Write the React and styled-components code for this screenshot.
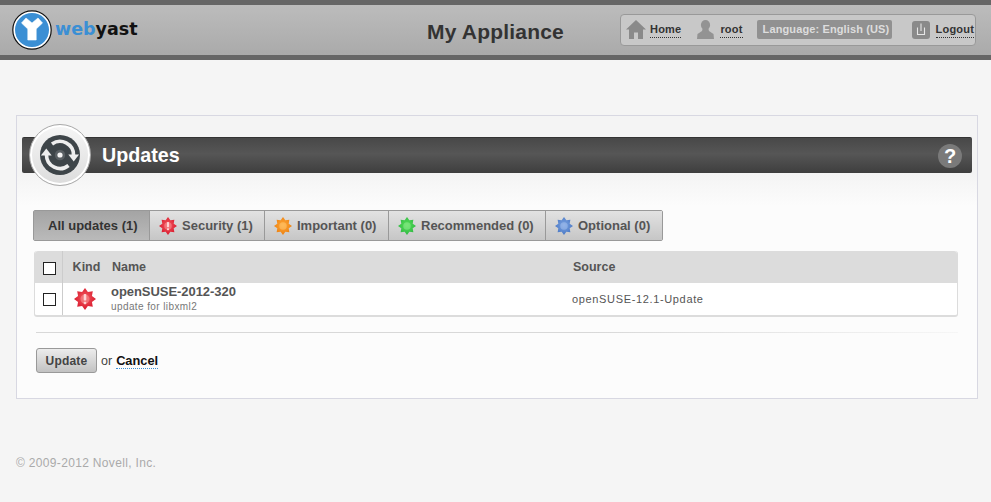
import React from "react";
import styled, { createGlobalStyle } from "styled-components";

const GlobalStyle = createGlobalStyle`
  html, body {
    margin: 0;
    padding: 0;
    background: #f5f5f5;
    font-family: "Liberation Sans", Arial, sans-serif;
  }
`;

const KIND_COLORS = {
  security: ["#f45a60", "#d8182c", "#fba8a8"],
  important: ["#ffa838", "#ec8010", "#ffd080"],
  recommended: ["#58e058", "#30b844", "#a0f0a0"],
  optional: ["#7ca4e2", "#4a78c4", "#b0c8f0"],
};

const starPoints = (cx, cy, outer, inner, count) => {
  const pts = [];
  for (let i = 0; i < count * 2; i++) {
    const r = i % 2 === 0 ? outer : inner;
    const a = (Math.PI * i) / count - Math.PI / 2;
    pts.push(`${(cx + r * Math.cos(a)).toFixed(2)},${(cy + r * Math.sin(a)).toFixed(2)}`);
  }
  return pts.join(" ");
};

const KindIcon = ({ kind, size = 18 }) => {
  const [light, dark, glow] = KIND_COLORS[kind];
  const id = `star-${kind}-${size}`;
  return (
    <svg width={size} height={size} viewBox="0 0 24 24" style={{ flex: "none" }}>
      <defs>
        <radialGradient id={id} cx="50%" cy="45%" r="55%">
          <stop offset="0%" stopColor={light} />
          <stop offset="100%" stopColor={dark} />
        </radialGradient>
      </defs>
      <polygon points={starPoints(12, 12, 12, 8.2, 8)} fill={`url(#${id})`} />
      <circle cx="12" cy="12" r="5" fill={glow} opacity="0.45" />
      {kind === "security" && (
        <g fill="#ffe4e4">
          <rect x="10.6" y="6.6" width="2.8" height="7" rx="0.8" opacity="0.85" />
          <rect x="10.6" y="15" width="2.8" height="2.6" rx="0.8" opacity="0.85" />
        </g>
      )}
    </svg>
  );
};

const Logo = () => (
  <svg width="40" height="40" viewBox="0 0 40 40">
    <circle cx="20" cy="20" r="19.2" fill="#fff" stroke="#111" strokeWidth="1.2" />
    <circle cx="20" cy="20" r="17" fill="#3b8fd4" />
    <path
      d="M9.5 13 L14 8 L20 13 L26 8 L30.5 13 L24.2 19 L24.2 30 L15.8 30 L15.8 19 Z"
      fill="#fff"
      stroke="#fff"
      strokeWidth="0.6"
      strokeLinejoin="round"
    />
  </svg>
);

const HomeIcon = () => (
  <svg width="20" height="19" viewBox="0 0 20 19">
    <path d="M10 0 L20 9.5 L17 9.5 L17 19 L12 19 L12 12.5 L8 12.5 L8 19 L3 19 L3 9.5 L0 9.5 Z" fill="#8a8a8a" />
  </svg>
);

const UserIcon = () => (
  <svg width="17" height="19" viewBox="0 0 17 19">
    <ellipse cx="8.5" cy="5" rx="4.6" ry="5" fill="#939393" />
    <path d="M5.5 9 L11.5 9 L12 11 L16.5 14 L17 19 L0 19 L0.5 14 L5 11 Z" fill="#939393" />
  </svg>
);

const LogoutIcon = () => (
  <svg width="18" height="18" viewBox="0 0 18 18">
    <rect width="18" height="18" rx="3" fill="#8a8a8a" />
    <path d="M5.5 6.5 V13.5 H12.5 V6.5 M9 2.5 V10" fill="none" stroke="#e6e6e6" strokeWidth="1.1" />
  </svg>
);

const UpdatesIcon = () => (
  <svg width="40" height="40" viewBox="0 0 40 40">
    <circle cx="20" cy="20" r="20" fill="#3e4549" />
    <g fill="none" stroke="#eee" strokeWidth="3.6">
      <path d="M6.5 20 A13.5 13.5 0 0 0 28.5 30.5" />
      <path d="M12 9 A13.5 13.5 0 0 1 33.5 20" />
    </g>
    <path d="M6.3 13.5 L0.9 20.5 L11.7 20.5 Z" fill="#eee" />
    <path d="M33.7 26.5 L28.3 19.5 L39.1 19.5 Z" fill="#eee" />
    <circle cx="20" cy="20" r="5.2" fill="#5a6064" />
    <circle cx="20" cy="20" r="2.6" fill="#f4f4f4" />
  </svg>
);

const TABS = [
  { label: "All updates (1)", width: 116, active: true },
  { label: "Security (1)", kind: "security", width: 115 },
  { label: "Important (0)", kind: "important", width: 124 },
  { label: "Recommended (0)", kind: "recommended", width: 157 },
  { label: "Optional (0)", kind: "optional", width: 116 },
];

const App = () => (
  <>
    <GlobalStyle />
    <TopBar>
      <Brand>
        <Logo />
        <BrandName>
          <span>web</span>yast
        </BrandName>
      </Brand>
      <ApplianceName>My Appliance</ApplianceName>
      <UserBox>
        <NavItem $gap={4}>
          <HomeIcon />
          <NavLink>Home</NavLink>
        </NavItem>
        <NavItem $left={16}>
          <UserIcon />
          <NavLink>root</NavLink>
        </NavItem>
        <LanguageBadge>Language: English (US)</LanguageBadge>
        <NavItem $left={20}>
          <LogoutIcon />
          <NavLink>Logout</NavLink>
        </NavItem>
      </UserBox>
    </TopBar>

    <Panel>
      <TitleBar>
        <TitleBadge>
          <UpdatesIcon />
        </TitleBadge>
        <Title>Updates</Title>
        <HelpButton>?</HelpButton>
      </TitleBar>

      <Tabs>
        {TABS.map((tab) => (
          <Tab key={tab.label} $active={tab.active} $width={tab.width}>
            {tab.kind && <KindIcon kind={tab.kind} />}
            {tab.label}
          </Tab>
        ))}
      </Tabs>

      <Table>
        <HeadRow>
          <CheckCell>
            <CheckBox $top={3} />
          </CheckCell>
          <KindCell>Kind</KindCell>
          <NameHead>Name</NameHead>
          <SourceHead>Source</SourceHead>
        </HeadRow>
        <BodyRow>
          <CheckCell>
            <CheckBox />
          </CheckCell>
          <KindCell $shift={5}>
            <KindIcon kind="security" size={22} />
          </KindCell>
          <NameCell>
            <PatchName>openSUSE-2012-320</PatchName>
            <PatchSummary>update for libxml2</PatchSummary>
          </NameCell>
          <SourceCell>openSUSE-12.1-Update</SourceCell>
        </BodyRow>
      </Table>

      <Divider />

      <Actions>
        <UpdateButton>Update</UpdateButton>
        <OrText>or</OrText>
        <CancelLink>Cancel</CancelLink>
      </Actions>
    </Panel>

    <Footer>© 2009-2012 Novell, Inc.</Footer>
  </>
);

const TopBar = styled.header`
  box-sizing: border-box;
  height: 60px;
  border-top: 5px solid #666;
  border-bottom: 5px solid #666;
  background: linear-gradient(#bcbcbc, #aaa);
  display: flex;
  align-items: center;
  padding: 0 15px 0 12px;
`;

const Brand = styled.div`
  display: flex;
  align-items: center;
  width: 415px;
  gap: 3px;
`;

const BrandName = styled.div`
  font-family: "DejaVu Sans", sans-serif;
  font-weight: 700;
  font-size: 17.5px;
  color: #111;
  margin-top: -3px;

  span {
    color: #3b8fd4;
  }
`;

const ApplianceName = styled.div`
  font-size: 21px;
  font-weight: 700;
  color: #333;
  letter-spacing: 0.2px;
  width: 193px;
  margin-top: 4px;
`;

const UserBox = styled.div`
  box-sizing: border-box;
  width: 356px;
  height: 32px;
  margin-left: auto;
  margin-top: -1px;
  border: 1px solid #999;
  border-radius: 4px;
  background: #c8c8c8;
  display: flex;
  align-items: center;
  padding: 0 0 0 5px;
`;

const NavItem = styled.div`
  display: flex;
  align-items: center;
  gap: ${(p) => p.$gap || 6}px;
  margin-left: ${(p) => p.$left || 0}px;
`;

const NavLink = styled.a`
  margin-top: 2px;
  font-size: 11px;
  font-weight: 700;
  color: #333;
  letter-spacing: 0.2px;
  line-height: 13px;
  border-bottom: 1px dotted #333;
  padding-bottom: 1px;
`;

const LanguageBadge = styled.div`
  box-sizing: border-box;
  height: 19px;
  line-height: 19px;
  margin-left: 14px;
  padding: 0 3px 0 6px;
  width: 135px;
  border-radius: 2px;
  background: #919191;
  color: #ddd;
  font-size: 11px;
  font-weight: 700;
  letter-spacing: 0.12px;
  white-space: nowrap;
`;

const Panel = styled.main`
  box-sizing: border-box;
  width: 962px;
  height: 284px;
  margin: 55px 0 0 16px;
  padding: 21px 5px 0;
  border: 1px solid #d8d8e2;
  background: linear-gradient(#f4f4f4 58px, #fcfcfc 90px);
`;

const TitleBar = styled.div`
  position: relative;
  box-sizing: border-box;
  height: 36px;
  border-radius: 2px;
  border-top: 1px solid #333;
  background: linear-gradient(#484848, #565656 45%, #3e3e3e);
  display: flex;
  align-items: center;
  padding: 0 10px 0 80px;
`;

const TitleBadge = styled.div`
  position: absolute;
  left: 7px;
  top: -14px;
  box-sizing: border-box;
  width: 62px;
  height: 62px;
  border-radius: 50%;
  border: 1px solid #aaa;
  background: linear-gradient(#f6f6f6, #dcdcdc);
  box-shadow: inset 0 0 0 2px #fff;
  display: flex;
  align-items: center;
  justify-content: center;
`;

const Title = styled.h1`
  margin: 0;
  font-size: 19.7px;
  font-weight: 700;
  color: #fff;
`;

const HelpButton = styled.div`
  margin-left: auto;
  width: 24px;
  height: 24px;
  border-radius: 50%;
  background: #7a7a7a;
  color: #fff;
  font-size: 20px;
  font-weight: 700;
  line-height: 24px;
  text-align: center;
`;

const Tabs = styled.div`
  box-sizing: border-box;
  display: flex;
  width: 630px;
  height: 31px;
  margin: 37px 0 0 11px;
  border: 1px solid #999;
  border-radius: 2px;
`;

const Tab = styled.div`
  box-sizing: border-box;
  width: ${(p) => p.$width}px;
  display: flex;
  align-items: center;
  gap: 5px;
  padding-left: ${(p) => (p.$active ? 14 : 9)}px;
  font-size: 13px;
  font-weight: 700;
  white-space: nowrap;
  color: ${(p) => (p.$active ? "#333" : "#555")};
  background: ${(p) =>
    p.$active
      ? "linear-gradient(#a4a4a4, #bababa)"
      : "linear-gradient(#e2e2e2, #c6c6c6)"};
  border-right: 1px solid #999;

  &:last-child {
    border-right: 0;
  }
`;

const Table = styled.div`
  box-sizing: border-box;
  width: 924px;
  margin: 10px 0 0 12px;
  border-radius: 3px;
  border: 1px solid #dcdcdc;
  border-top: 0;
  border-bottom-width: 2px;
  background: #fff;
`;

const HeadRow = styled.div`
  display: flex;
  align-items: center;
  height: 32px;
  background: #dcdcdc;
  border-radius: 3px 3px 0 0;
  font-size: 12.5px;
  font-weight: 700;
  color: #555;
`;

const BodyRow = styled.div`
  display: flex;
  align-items: center;
  height: 32px;
`;

const CheckCell = styled.div`
  box-sizing: border-box;
  width: 28px;
  height: 100%;
  border-right: 1px solid #ccc;
  display: flex;
  align-items: center;
  justify-content: center;
  padding-left: 2px;
`;

const CheckBox = styled.div`
  box-sizing: border-box;
  width: 13px;
  height: 13px;
  margin-top: ${(p) => p.$top || 0}px;
  border: 1px solid #222;
  background: #fff;
`;

const KindCell = styled.div`
  width: 49px;
  display: flex;
  justify-content: center;
  padding-right: ${(p) => p.$shift || 2}px;
  box-sizing: border-box;
`;

const NameHead = styled.div`
  width: 461px;
`;

const SourceHead = styled.div``;

const NameCell = styled.div`
  box-sizing: border-box;
  width: 461px;
  margin-left: -1px;
`;

const PatchName = styled.div`
  font-size: 13px;
  font-weight: 700;
  letter-spacing: -0.05px;
  color: #555;
  line-height: 15px;
`;

const PatchSummary = styled.div`
  font-size: 10px;
  letter-spacing: 0.4px;
  color: #777;
  line-height: 14px;
  margin-top: 1px;
`;

const SourceCell = styled.div`
  font-size: 11px;
  letter-spacing: 0.65px;
  color: #555;
`;

const Divider = styled.div`
  width: 922px;
  height: 1px;
  margin: 15px 0 0 14px;
  background: linear-gradient(to right, #d8d8d8 60%, #f6f6f6);
`;

const Actions = styled.div`
  display: flex;
  align-items: center;
  margin: 15px 0 0 14px;
  font-size: 13px;
`;

const UpdateButton = styled.button`
  box-sizing: border-box;
  width: 61px;
  height: 25px;
  padding: 0;
  border: 1px solid #999;
  border-radius: 3px;
  background: linear-gradient(#ececec, #c2c2c2);
  color: #444;
  font: 700 12px "Liberation Sans", Arial, sans-serif;
  letter-spacing: 0.2px;
`;

const OrText = styled.span`
  margin: 0 4px;
  color: #444;
  font-size: 12.5px;
`;

const CancelLink = styled.a`
  margin-top: 2px;
  font-size: 12.8px;
  font-weight: 700;
  color: #111;
  line-height: 14px;
  border-bottom: 1px dotted #3b8fd4;
`;

const Footer = styled.footer`
  margin: 57px 0 0 16px;
  font-size: 12px;
  letter-spacing: 0.33px;
  color: #aaa;
`;

export default App;
